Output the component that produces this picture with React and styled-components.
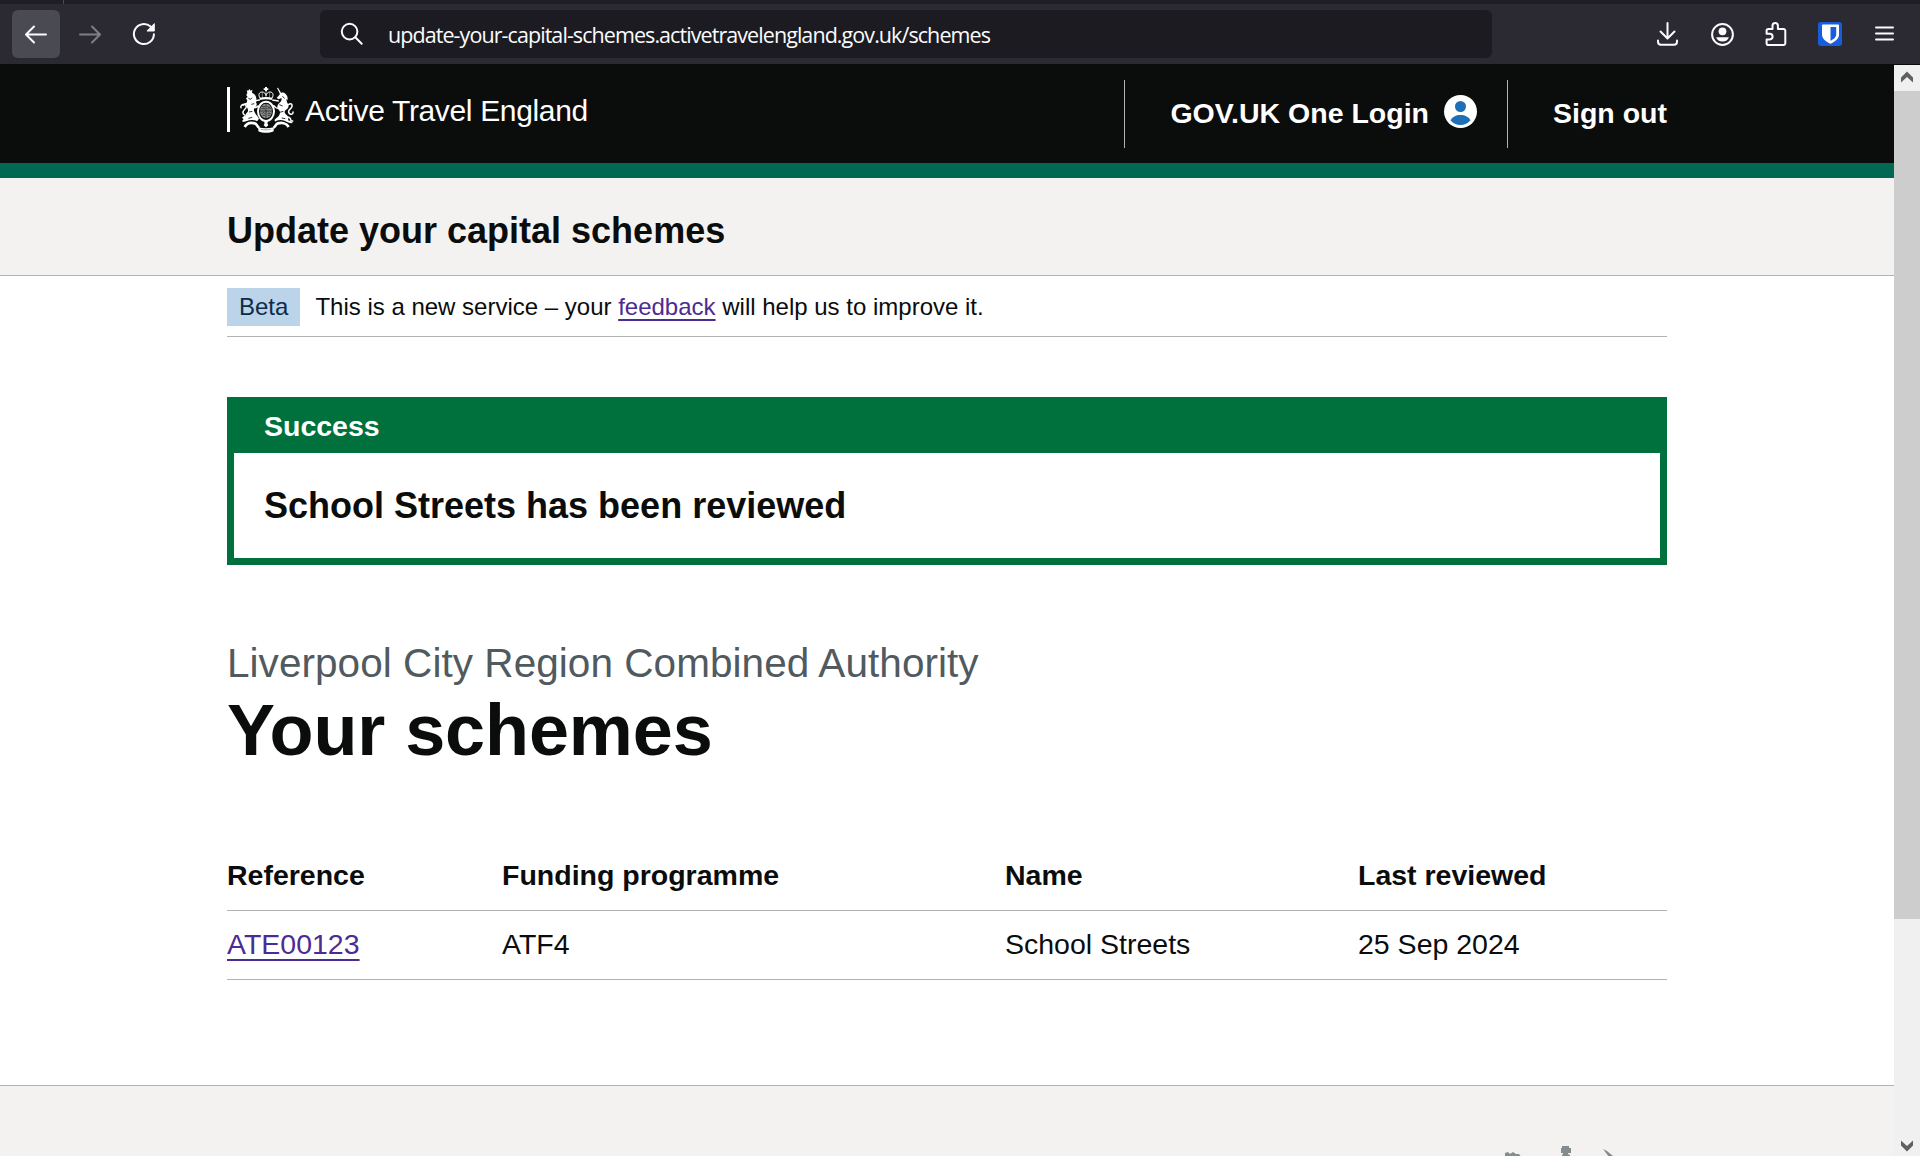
import React from "react";
import styled, { createGlobalStyle } from "styled-components";

const sans = `"Liberation Sans", Arial, sans-serif`;

const GlobalStyle = createGlobalStyle`
  *, *::before, *::after { box-sizing: border-box; }
  body { margin: 0; background: #fff; color: #0b0c0c; font-family: ${sans}; }
  svg { display: block; flex: none; }
`;

/* ---------- Browser chrome ---------- */

const Window = styled.div`
  width: 1920px;
  height: 1156px;
  overflow: hidden;
  display: flex;
  flex-direction: column;
`;

const TabStrip = styled.div`
  flex: none;
  height: 4px;
  padding-left: 63px;
  background: #1f1e25;
`;

const TabDivider = styled.div`
  width: 1px;
  height: 4px;
  background: #4b4a52;
`;

const Toolbar = styled.div`
  flex: none;
  height: 60px;
  padding: 0 12px;
  display: flex;
  align-items: center;
  background: #2b2a33;
  color: #fbfbfe;
`;

const ToolButton = styled.div`
  width: 48px;
  height: 48px;
  margin-right: 6px;
  display: flex;
  align-items: center;
  justify-content: center;
  border-radius: 6px;
  background: ${(p) => (p.$active ? "#4a4a53" : "transparent")};
  opacity: ${(p) => (p.$disabled ? 0.4 : 1)};
`;

const AddressBar = styled.div`
  width: 1172px;
  height: 48px;
  margin-left: 146px;
  padding-left: 20px;
  display: flex;
  align-items: center;
  gap: 24px;
  border-radius: 6px;
  background: #1c1b22;
`;

const Url = styled.span`
  padding-top: 2px;
  font-family: "Open Sans", "Noto Sans", sans-serif;
  font-size: 21.5px;
  line-height: 30px;
  letter-spacing: -0.93px;
  white-space: nowrap;
`;

const ToolActions = styled.div`
  margin-left: auto;
  padding-right: 12px;
  display: flex;
  align-items: center;
  gap: 30px;
`;

const Viewport = styled.div`
  flex: 1;
  min-height: 0;
  display: flex;
`;

const Page = styled.div`
  width: 1894px;
  display: flex;
  flex-direction: column;
`;

const Scrollbar = styled.div`
  width: 26px;
  display: flex;
  flex-direction: column;
  background: #f0f0f0;
  border-top: 1px solid #0b0c0c;
`;

const ScrollButton = styled.div`
  flex: none;
  height: ${(p) => (p.$end ? 21 : 26)}px;
  padding-bottom: ${(p) => (p.$end ? 0 : 2)}px;
  display: flex;
  align-items: center;
  justify-content: center;
`;

const ScrollThumb = styled.div`
  height: 828px;
  margin-bottom: auto;
  background: #cdcdcd;
`;

/* ---------- Page ---------- */

const Container = styled.div`
  width: 1440px;
  margin-left: 227px;
`;

const Header = styled.header`
  flex: none;
  height: 114px;
  background: #0b0c0c;
  border-bottom: 15px solid #006853;
`;

const HeaderInner = styled(Container)`
  height: 99px;
  display: flex;
  justify-content: space-between;
  color: #fff;
`;

const Brand = styled.div`
  height: 45px;
  margin-top: 23px;
  padding-left: 10px;
  display: flex;
  border-left: 3px solid #fff;
`;

const BrandName = styled.span`
  margin: 4px 0 0 11px;
  font-size: 30px;
  line-height: 40px;
  letter-spacing: -0.35px;
  white-space: nowrap;
`;

const Nav = styled.nav`
  margin-top: 16px;
  height: 68px;
  display: flex;
`;

const NavItem = styled.a`
  height: 68px;
  padding: ${(p) => (p.$last ? "0 0 0 45px" : "0 30px 0 45px")};
  display: flex;
  align-items: center;
  gap: 15px;
  border-left: 1px solid #b1b4b6;
  color: #fff;
  font-size: 28.5px;
  font-weight: 700;
  line-height: 37.5px;
  white-space: nowrap;

  svg { margin-bottom: 5px; }
`;

const ServiceBar = styled.div`
  flex: none;
  height: 98px;
  padding-top: 30px;
  background: #f3f2f1;
  border-bottom: 1px solid #b1b4b6;
`;

const ServiceName = styled(Container)`
  font-size: 36px;
  font-weight: 700;
  line-height: 45px;
`;

const PhaseBanner = styled(Container)`
  flex: none;
  height: 61px;
  padding-top: 12px;
  display: flex;
  align-items: flex-start;
  gap: 15px;
  border-bottom: 1px solid #b1b4b6;
  font-size: 24px;
  line-height: 38px;
`;

const Tag = styled.strong`
  height: 38px;
  padding: 0 12px;
  font-weight: 400;
  color: #0c2d4a;
  background: #bbd4ea;
`;

const Link = styled.a`
  color: #4c2c92;
  text-decoration: underline;
  text-decoration-thickness: 2px;
  text-decoration-skip-ink: none;
  text-underline-offset: ${(p) => (p.$large ? 5 : 4)}px;
`;

const Banner = styled(Container)`
  flex: none;
  height: 168px;
  margin-top: 60px;
  border: 7px solid #00703c;
  border-top: 0;
`;

const BannerHeader = styled.div`
  height: 56px;
  padding: 10px 0 0 30px;
  background: #00703c;
  color: #fff;
  font-size: 28.5px;
  font-weight: 700;
  line-height: 38px;
`;

const BannerBody = styled.div`
  height: 105px;
  padding-left: 30px;
  font-size: 36px;
  font-weight: 700;
  line-height: 105px;
`;

const Caption = styled(Container)`
  flex: none;
  margin-top: 76px;
  font-size: 40.5px;
  line-height: 45px;
  letter-spacing: 0.05px;
  color: #505a5f;
`;

const Heading = styled.h1`
  flex: none;
  width: 1440px;
  margin: 7px 0 72px 227px;
  font-size: 72px;
  font-weight: 700;
  line-height: 75px;
  letter-spacing: -0.1px;
`;

const Table = styled(Container)`
  flex: none;
`;

const Row = styled.div`
  height: ${(p) => (p.$head ? 71 : 69)}px;
  padding-bottom: ${(p) => (p.$head ? 0 : 2)}px;
  display: grid;
  grid-template-columns: 275px 503px 353px 1fr;
  align-items: center;
  border-bottom: 1px solid #b1b4b6;
  font-size: 28.5px;
  font-weight: ${(p) => (p.$head ? 700 : 400)};
  line-height: 38px;
`;

const Footer = styled.footer`
  flex: 1;
  margin-top: 105px;
  padding: 60px 0 0 1500px;
  background: #f3f2f1;
  border-top: 1px solid #b1b4b6;
`;

/* ---------- Icons ---------- */

const line = {
  fill: "none",
  stroke: "currentColor",
  strokeWidth: 2,
  strokeLinecap: "round",
  strokeLinejoin: "round",
};

const BackIcon = () => (
  <svg width="24" height="24" viewBox="0 0 24 24" {...line}>
    <path d="M22 12.5H2.5M10 4.5l-8 8 8 8" />
  </svg>
);

const ForwardIcon = () => (
  <svg width="24" height="24" viewBox="0 0 24 24" {...line}>
    <path d="M2 12.5h19.5M14 4.5l8 8-8 8" />
  </svg>
);

const ReloadIcon = () => (
  <svg width="24" height="24" viewBox="0 0 24 24" {...line}>
    <path d="M21.9 12.2A10 10 0 1 1 18.6 4.6" />
    <path d="M22.3 2v7h-7z" fill="currentColor" strokeWidth="1" />
  </svg>
);

const SearchIcon = () => (
  <svg width="24" height="24" viewBox="0 0 24 24" {...line}>
    <circle cx="9.6" cy="9.6" r="7.8" />
    <path d="M15.3 15.3l6.4 6.4" />
  </svg>
);

const DownloadIcon = () => (
  <svg width="24" height="24" viewBox="0 0 24 24" {...line}>
    <path d="M11.500 1v15M4.500 9.500l7 7 7-7M2 18.500v1.200a3 3 0 0 0 3 3h13a3 3 0 0 0 3-3v-1.200" />
  </svg>
);

const AccountIcon = () => (
  <svg width="24" height="24" viewBox="0 0 24 24">
    <circle cx="12.5" cy="12.5" r="10.4" {...line} />
    <circle cx="12.5" cy="9.3" r="3.9" fill="currentColor" />
    <path d="M6.100 15.200h12.800c-.8 2.700-3.300 4.300-6.400 4.300s-5.600-1.600-6.400-4.300z" fill="currentColor" />
  </svg>
);

const PuzzleIcon = () => (
  <svg width="24" height="24" viewBox="0 0 24 24" {...line}>
    <path d="M8.500 7V3.800a2.700 2.700 0 0 1 5.400 0V7h5.600a1.800 1.800 0 0 1 1.800 1.800v12.400a1.800 1.800 0 0 1-1.800 1.800H4.400a1.800 1.800 0 0 1-1.800-1.800V17.400h3.200a2.800 2.800 0 0 0 0-5.600H2.600V8.800A1.800 1.800 0 0 1 4.400 7z" />
  </svg>
);

const ShieldIcon = () => (
  <svg width="24" height="24" viewBox="0 0 24 24">
    <rect width="24" height="24" rx="3" fill="#175ddc" />
    <path
      fill="#fff"
      fillRule="evenodd"
      d="M4.800 2.500h15.400a.8.800 0 0 1 .8.800v9.200c0 4.300-4 7.200-8.500 9.300C8 19.700 4 16.800 4 12.500V3.300a.8.800 0 0 1 .8-.8zM12.500 5v13.800c3-1.600 5.700-3.600 5.700-6.400V5z"
    />
  </svg>
);

const MenuIcon = () => (
  <svg width="24" height="24" viewBox="0 0 24 24" {...line}>
    <path d="M4 5.500h17M4 11.500h17M4 17.500h17" />
  </svg>
);

const Chevron = ({ down }) => (
  <svg width="14" height="12" viewBox="0 0 14 12" fill="#606060">
    <path d={down ? "M1 .5l6 5.500L13 .5V5.500L7 11.500 1 5.500z" : "M1 11.500l6-5.500 6 5.500V6.500L7 .5 1 6.500z"} />
  </svg>
);

const UserBadge = () => (
  <svg width="33" height="33" viewBox="0 0 33 33">
    <circle cx="16.500" cy="16.500" r="16.500" fill="#fff" />
    <ellipse cx="16.500" cy="11.500" rx="5.500" ry="5.600" fill="#1d70b8" />
    <path fill="#1d70b8" d="M6.500 25.200c1.600-3.300 5.400-5.300 10-5.300s8.400 2 10 5.300c-2.300 3-5.900 4.700-10 4.700s-7.700-1.700-10-4.700z" />
  </svg>
);

const CrestIcon = () => (
  <svg width="54" height="46" viewBox="0 0 162 138" fill="#fff" stroke="none">
    {/* crown */}
    <path d="M75 0h6v4h4v5h-4v4h-6V9h-4V4h4z" />
    <g fill="none" stroke="#fff" strokeWidth="3">
      <path d="M60 33c-6-9-3-18 6-18 6 0 11 4 12 11 1-7 6-11 12-11 9 0 12 9 6 18" />
      <path d="M78 13v20M68 18c-2 6-1 10 1 15M88 18c2 6 1 10-1 15" strokeWidth="1.500" />
    </g>
    <path d="M59 32c12-3 26-3 38 0v7c-12-3-26-3-38 0z" />
    {/* garter and shield */}
    <ellipse cx="78" cy="73" rx="24" ry="29" fill="none" stroke="#fff" strokeWidth="6" />
    <ellipse cx="78" cy="72" rx="18" ry="22" fill="#8c8e8e" />
    <g fill="none" stroke="#0b0c0c" strokeWidth="2">
      <path d="M78 50v44M60 72h36M65 59h10M64 65h11M66 80c3-4 6-4 9 0M67 87c3-3 6-3 8 0M82 58c3 4 8 4 10 0M82 66c4-4 8-4 11 0M83 79h9M83 85h8" />
    </g>
    {/* lion */}
    <path d="M20 8l4 4 4-6 4 5 5-3-1 10H22z" />
    <path d="M21 19c8-5 19-3 24 5 5 7 5 15 3 22 4 6 2 12-3 15-5 4-4 10-1 15 3 8 10 12 13 19l-7 9c-8-1-17-4-25-3-9 1-14 5-18 3 1-6 7-8 12-10-5-6-3-13 3-18 4-4 2-9-1-15-3-7-3-14 1-20l-4-7 5-4-4-5z" />
    <path d="M6 92c8-8 15-10 27-7l2 8c-9-2-14 0-18 7-3 4-9 3-10 1l4-4z" />
    <g fill="none" stroke="#fff" strokeWidth="4.500" strokeLinecap="round" strokeLinejoin="round">
      <path d="M44 42c7 0 9-4 14-3M42 62c7 0 9-3 13-5M22 50c-7 1-10-1-13 5M14 84C2 75 14 69 18 62c3-7-4-12-11-9-4 2-5 5-4 9" />
      {/* unicorn legs and tail */}
      <path d="M115 42c-7 0-10-3-16-2M114 64c-8 0-8-5-13-8M145 53c8-5 12-2 11 5-1 9-15 10-9 20 4 7 13 4 12-3M139 89c8 1 13 2 14 12l5 1" />
    </g>
    <path d="M111 3l3-1 11 18-4 3z" />
    <path d="M120 21c5-6 12-5 16-1 5 4 8 10 7 20l-3-5c-1 6 1 10 4 16 4 9 0 14-7 18-5 4-4 9 2 14 7 5 7 12 5 17 7 2 13 3 14 8-8 2-14-3-24-3-9 0-17 3-26 3l-5-9c9-8 17-12 17-23 0-7-8-9-8-17 0-8 7-10 11-16 2-4 2-7 1-10l-8 4-6-4z" />
    <g fill="none" stroke="#0b0c0c" strokeWidth="2.500">
      <path d="M25 34l7 3 4-5M34 52l9-2M27 75l10-2M118 53l10 4M119 76l11-3M127 28l7 6M25 94l12-3M125 93l11 2" />
    </g>
    {/* motto ribbon */}
    <path
      d="M12 122c6-12 19-17 33-14 8 2 7 11 13 16 12 4 30 4 42 0 6-5 5-14 13-16 14-3 27 2 33 14"
      fill="none"
      stroke="#0b0c0c"
      strokeWidth="16"
    />
    <path
      d="M14 120c6-11 18-14 30-11 8 3 7 11 14 13M146 120c-6-11-20-14-32-11-8 3-7 11-14 13"
      fill="none"
      stroke="#fff"
      strokeWidth="8"
    />
    <path d="M55 121c14 4 32 4 46 0v12c-14 6-32 6-46 0z" />
    <path d="M72 103h12l-2 6 3 6-7 6-7-6 3-6z" />
    <path d="M63 127c10 2 20 2 30 0" fill="none" stroke="#777" strokeWidth="2" />
  </svg>
);

const FooterCrest = () => (
  <svg width="120" height="11" viewBox="0 0 120 11" fill="#858c8f">
    <path d="M5 7l3-1 2 2 3-2 3 2 3 0 3 4H5z" />
    <path d="M62 0h7v2h2v5h-3v1l2 1v2h-8V9l1-1V7h-2V2h1z" />
    <path d="M103 3l4 2 6 5v1h-4z" />
  </svg>
);

const schemes = [
  { reference: "ATE00123", programme: "ATF4", name: "School Streets", reviewed: "25 Sep 2024" },
];

export default function App() {
  return (
    <Window>
      <GlobalStyle />
      <TabStrip>
        <TabDivider />
      </TabStrip>
      <Toolbar>
        <ToolButton $active><BackIcon /></ToolButton>
        <ToolButton $disabled><ForwardIcon /></ToolButton>
        <ToolButton><ReloadIcon /></ToolButton>
        <AddressBar>
          <SearchIcon />
          <Url>update-your-capital-schemes.activetravelengland.gov.uk/schemes</Url>
        </AddressBar>
        <ToolActions>
          <DownloadIcon />
          <AccountIcon />
          <PuzzleIcon />
          <ShieldIcon />
          <MenuIcon />
        </ToolActions>
      </Toolbar>
      <Viewport>
        <Page>
          <Header>
            <HeaderInner>
              <Brand>
                <CrestIcon />
                <BrandName>Active Travel England</BrandName>
              </Brand>
              <Nav>
                <NavItem>GOV.UK One Login <UserBadge /></NavItem>
                <NavItem $last>Sign out</NavItem>
              </Nav>
            </HeaderInner>
          </Header>
          <ServiceBar>
            <ServiceName>Update your capital schemes</ServiceName>
          </ServiceBar>
          <PhaseBanner>
            <Tag>Beta</Tag>
            <span>
              This is a new service – your <Link>feedback</Link> will help us to improve it.
            </span>
          </PhaseBanner>
          <Banner>
            <BannerHeader>Success</BannerHeader>
            <BannerBody>School Streets has been reviewed</BannerBody>
          </Banner>
          <Caption>Liverpool City Region Combined Authority</Caption>
          <Heading>Your schemes</Heading>
          <Table>
            <Row $head>
              <span>Reference</span>
              <span>Funding programme</span>
              <span>Name</span>
              <span>Last reviewed</span>
            </Row>
            {schemes.map((s) => (
              <Row key={s.reference}>
                <span><Link $large>{s.reference}</Link></span>
                <span>{s.programme}</span>
                <span>{s.name}</span>
                <span>{s.reviewed}</span>
              </Row>
            ))}
          </Table>
          <Footer>
            <FooterCrest />
          </Footer>
        </Page>
        <Scrollbar>
          <ScrollButton><Chevron /></ScrollButton>
          <ScrollThumb />
          <ScrollButton $end><Chevron down /></ScrollButton>
        </Scrollbar>
      </Viewport>
    </Window>
  );
}
